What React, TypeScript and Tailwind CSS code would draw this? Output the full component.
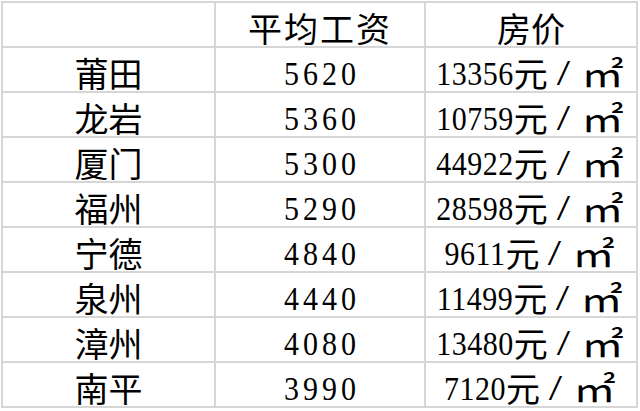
const rows = [
  { city: '莆田', wage: '5620', price: '13356' },
  { city: '龙岩', wage: '5360', price: '10759' },
  { city: '厦门', wage: '5300', price: '44922' },
  { city: '福州', wage: '5290', price: '28598' },
  { city: '宁德', wage: '4840', price: '9611' },
  { city: '泉州', wage: '4440', price: '11499' },
  { city: '漳州', wage: '4080', price: '13480' },
  { city: '南平', wage: '3990', price: '7120' },
];

const cell = 'bg-white flex items-center justify-center h-[43px] leading-none pt-[6px]';
// serif digits, stretched a little so they stand as tall as the reference
const digits = "inline-block font-['Liberation_Serif',serif] text-[30px] scale-y-[1.15]";

export default function App() {
  return (
    <div className="w-[640px] h-[411px] bg-white pt-px pl-px text-black text-[34px] font-['Noto_Sans_CJK_SC',sans-serif]">
      <div className="grid grid-cols-[211px_208px_210px] gap-[2px] p-[2px] bg-[#d6d6d6] w-fit">
        {/* header */}
        <div className={cell} />
        <div className={`${cell} tracking-[2px]`}>平均工资</div>
        <div className={cell}>房价</div>

        {rows.map((r) => (
          <div key={r.city} className="contents">
            <div className={cell}>{r.city}</div>
            <div className={cell}>
              <span className={`${digits} tracking-[4px] -mr-[4px]`}>{r.wage}</span>
            </div>
            <div className={cell}>
              <span className={`${digits} tracking-[0.5px]`}>{r.price}</span>
              <span>元</span>
              <span className="inline-block w-[31px] text-center font-['Liberation_Serif',serif] text-[30px] scale-x-[1.6] scale-y-[1.2]">/</span>
              <span className="inline-block w-[47px] text-center scale-x-[1.25]">㎡</span>
            </div>
          </div>
        ))}
      </div>
    </div>
  );
}
